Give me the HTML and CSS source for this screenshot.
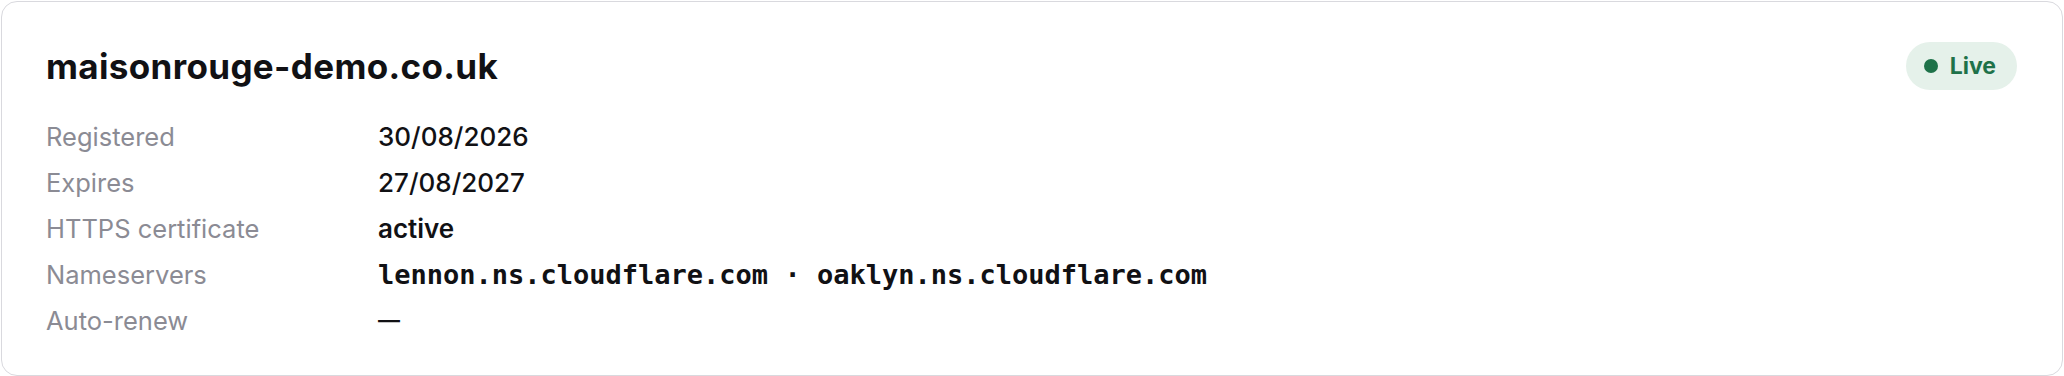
FILE: index.html
```html
<!DOCTYPE html>
<html lang="en">
<head>
<meta charset="utf-8">
<title>maisonrouge-demo.co.uk</title>
<link rel="stylesheet" href="styles.css">
</head>
<body>
<div class="page">
  <section class="card">
    <header class="card-head">
      <h1 class="domain">maisonrouge-demo.co.uk</h1>
      <span class="badge"><span class="dot"></span>Live</span>
    </header>
    <dl class="details">
      <dt>Registered</dt><dd>30/08/2026</dd>
      <dt>Expires</dt><dd>27/08/2027</dd>
      <dt>HTTPS certificate</dt><dd class="strong">active</dd>
      <dt>Nameservers</dt><dd class="mono">lennon.ns.cloudflare.com · oaklyn.ns.cloudflare.com</dd>
      <dt>Auto-renew</dt><dd class="dash">—</dd>
    </dl>
  </section>
</div>
</body>
</html>
```

FILE: styles.css
```css
* { box-sizing: border-box; }
html, body { margin: 0; padding: 0; background: #ffffff; }
body { font-family: Inter, "Liberation Sans", sans-serif; color: #111114; }
.page { padding: 1px; }
.card {
  border: 1px solid #d9d9de;
  border-radius: 16px;
  padding: 40px 45px 32px 44px;
  background: #fff;
}
.card-head {
  display: flex;
  justify-content: space-between;
  align-items: center;
}
.domain {
  margin: 0;
  font-size: 35px;
  font-weight: 700;
  letter-spacing: 0.35px;
  line-height: 48px;
}
.badge {
  display: inline-flex;
  align-items: center;
  gap: 12px;
  height: 48px;
  padding: 0 21px 0 18px;
  border-radius: 24px;
  background: #e5f1ea;
  color: #1e7249;
  font-size: 23px;
  font-weight: 700;
}
.dot { width: 14px; height: 14px; border-radius: 50%; background: #1e7249; }
.details {
  margin: 23px 0 0;
  display: grid;
  grid-template-columns: 332px 1fr;
  grid-auto-rows: 46px;
  align-items: center;
}
.details dt {
  font-size: 25.5px;
  color: #8b8b94;
  font-weight: 400;
}
.details dd {
  margin: 0;
  font-size: 26px;
  font-weight: 500;
  color: #111114;
}
.details dd.strong { font-weight: 600; }
.details dd.dash { font-weight: 600; font-size: 22px; }
.details dd.mono {
  font-family: "DejaVu Sans Mono", "Liberation Mono", monospace;
  font-weight: 700;
  font-size: 27px;
}
```
